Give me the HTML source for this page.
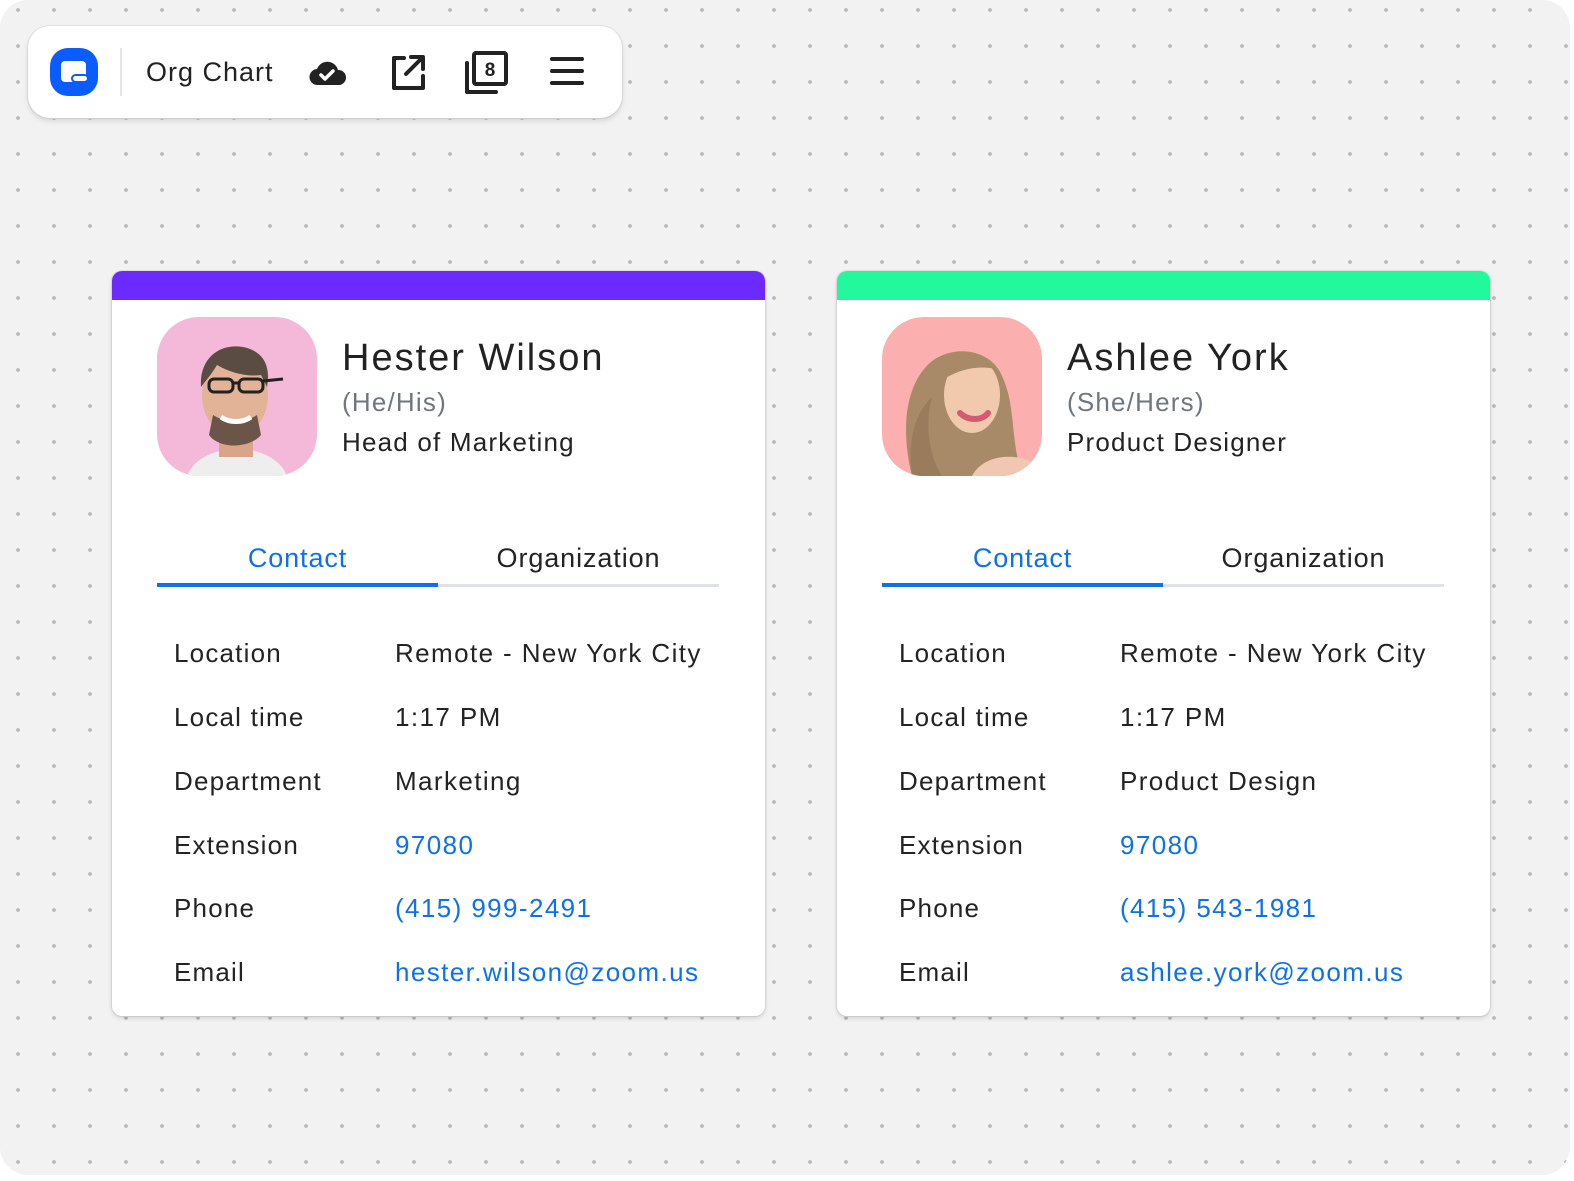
<!DOCTYPE html>
<html><head><meta charset="utf-8"><style>
*{margin:0;padding:0;box-sizing:border-box}
body{width:1574px;height:1181px;background:#fff;font-family:"Liberation Sans",sans-serif;position:relative;overflow:hidden}
.bg{position:absolute;left:0;top:0;width:1570px;height:1175px;border-radius:28px;background-color:#f2f2f2;background-image:radial-gradient(circle,#b8b8b8 1.6px,transparent 2.2px);background-size:36px 36px;background-position:0px -8px}
.tb{position:absolute;left:28px;top:26px;width:594px;height:92px;background:#fff;border-radius:22px;box-shadow:0 3px 6px rgba(0,0,0,.12),0 0 0 1px #e4e4e4}
.logo{position:absolute;left:22px;top:22px;width:48px;height:48px;border-radius:18px;background:#0b5cff}
.card{position:absolute;top:271px;width:653px;height:745px;background:#fff;border-radius:10px;box-shadow:0 2px 5px rgba(0,0,0,.15),0 0 0 1px #e3e3e3;overflow:hidden}
.bar{height:29px}
.av{position:absolute;left:45px;top:46px;width:160px;height:159px;border-radius:42px;overflow:hidden}
.name{position:absolute;left:230px;top:66px;font-size:38px;color:#222;letter-spacing:2px}
.pro{position:absolute;left:230px;top:116px;font-size:26px;color:#6e7680;letter-spacing:1.2px}
.title{position:absolute;left:230px;top:156px;font-size:26px;color:#232323;letter-spacing:1.2px}
.tab{position:absolute;top:272px;font-size:27px;text-align:center;width:281px;letter-spacing:0.9px}
.line{position:absolute;left:45px;top:313px;width:562px;height:3px;background:#dfe3e8}
.uline{position:absolute;left:45px;top:312px;width:281px;height:4px;background:#0e71eb}
.row{position:absolute;left:62px;font-size:26px;color:#232323;letter-spacing:1.2px}
.val{position:absolute;left:283px;font-size:26px;color:#232323;letter-spacing:1.4px}
.lnk{color:#0e71eb}
</style></head><body>
<div class="bg"></div>
<div class="tb">
 <div class="logo"><svg width="48" height="48" viewBox="0 0 48 48"><rect x="11" y="13" width="25" height="21" rx="4" fill="#fff"/><rect x="22" y="27" width="16" height="7" rx="3.5" fill="#fff" stroke="#0b5cff" stroke-width="2"/></svg></div>
 <div style="position:absolute;left:92px;top:22px;width:2px;height:48px;background:#e6e6e6"></div>
 <div style="position:absolute;left:118px;top:31px;font-size:27px;color:#222;letter-spacing:1px">Org Chart</div>
 <svg style="position:absolute;left:280px;top:28px" width="40" height="36" viewBox="0 0 40 36"><path d="M10 31a8 8 0 0 1-1-16 11 11 0 0 1 21 1 7.5 7.5 0 0 1 1 15z" fill="#222"/><path d="M13 21l4 4 8-8" stroke="#fff" stroke-width="3.5" fill="none" stroke-linecap="round" stroke-linejoin="round"/></svg>
 <svg style="position:absolute;left:360px;top:26px" width="40" height="40" viewBox="0 0 40 40"><path d="M16 6H6v30h29V24" stroke="#222" stroke-width="4" fill="none" stroke-linejoin="round" stroke-linecap="round"/><path d="M18 22L34 6M23 5h12v12" stroke="#222" stroke-width="4" fill="none" stroke-linecap="round" stroke-linejoin="round"/></svg>
 <svg style="position:absolute;left:434px;top:23px" width="50" height="48" viewBox="0 0 50 48"><path d="M5 14v29h29" stroke="#222" stroke-width="4" fill="none" stroke-linecap="round" stroke-linejoin="round"/><rect x="12" y="4" width="32" height="31" rx="2" stroke="#222" stroke-width="4" fill="#fff"/><text x="28" y="27" font-family="Liberation Sans" font-weight="bold" font-size="19" text-anchor="middle" fill="#222">8</text></svg>
 <svg style="position:absolute;left:522px;top:30px" width="34" height="32" viewBox="0 0 34 32"><path d="M2 3h30M2 15h30M2 27h30" stroke="#222" stroke-width="4" stroke-linecap="round"/></svg>
</div>

<div class="card" style="left:112px">
 <div class="bar" style="background:#6b2aff"></div>
 <div class="av" style="background:#f4b9d9"><svg width="160" height="159" viewBox="0 0 160 159"><path d="M30 159c8-20 30-26 50-28 20 2 42 8 50 28z" fill="#eeeeee"/><rect x="62" y="110" width="34" height="30" fill="#d9a58a"/><ellipse cx="78" cy="78" rx="33" ry="42" fill="#e2b396"/><path d="M44 70c-2-30 20-44 42-40 20 4 28 18 24 40l-6-12c-14 2-30-2-44-10-6 10-10 14-16 22z" fill="#5a4c42"/><path d="M52 118c10 14 40 14 52 0l-4-20c-12 8-32 8-44 0z" fill="#6b5548"/><path d="M64 100c8 6 22 6 30 0" stroke="#fff" stroke-width="5" fill="none"/><rect x="52" y="62" width="24" height="13" rx="5" fill="none" stroke="#222" stroke-width="3"/><rect x="82" y="62" width="24" height="13" rx="5" fill="none" stroke="#222" stroke-width="3"/><path d="M76 66h6M106 64l20-2" stroke="#222" stroke-width="3"/></svg></div>
 <div class="name">Hester Wilson</div>
 <div class="pro">(He/His)</div>
 <div class="title">Head of Marketing</div>
 <div class="tab" style="left:45px;color:#0e71eb">Contact</div>
 <div class="tab" style="left:326px;color:#232323">Organization</div>
 <div class="line"></div><div class="uline"></div>
 <div class="row" style="top:367px">Location</div><div class="val" style="top:367px">Remote - New York City</div>
 <div class="row" style="top:431px">Local time</div><div class="val" style="top:431px">1:17 PM</div>
 <div class="row" style="top:495px">Department</div><div class="val" style="top:495px">Marketing</div>
 <div class="row" style="top:559px">Extension</div><div class="val lnk" style="top:559px">97080</div>
 <div class="row" style="top:622px">Phone</div><div class="val lnk" style="top:622px">(415) 999-2491</div>
 <div class="row" style="top:686px">Email</div><div class="val lnk" style="top:686px">hester.wilson@zoom.us</div>
</div>

<div class="card" style="left:837px">
 <div class="bar" style="background:#22f89c"></div>
 <div class="av" style="background:#fbb0af"><svg width="160" height="159" viewBox="0 0 160 159"><path d="M30 159c-10-40-10-90 20-115 25-18 60-10 70 15 14 30 8 60 20 100z" fill="#a88a68"/><path d="M90 159c10-20 40-24 60-14v14z" fill="#f0c7b0"/><ellipse cx="90" cy="78" rx="28" ry="38" fill="#f1c9ad"/><path d="M62 50c10-14 40-18 52 2-18-4-36 0-52 10z" fill="#a88a68"/><path d="M78 96c8 8 22 8 28 0" stroke="#d45a70" stroke-width="6" fill="none" stroke-linecap="round"/><path d="M50 80c-8 30-2 60 10 79h-30c-4-30 0-60 20-79z" fill="#9a7c5c"/></svg></div>
 <div class="name">Ashlee York</div>
 <div class="pro">(She/Hers)</div>
 <div class="title">Product Designer</div>
 <div class="tab" style="left:45px;color:#0e71eb">Contact</div>
 <div class="tab" style="left:326px;color:#232323">Organization</div>
 <div class="line"></div><div class="uline"></div>
 <div class="row" style="top:367px">Location</div><div class="val" style="top:367px">Remote - New York City</div>
 <div class="row" style="top:431px">Local time</div><div class="val" style="top:431px">1:17 PM</div>
 <div class="row" style="top:495px">Department</div><div class="val" style="top:495px">Product Design</div>
 <div class="row" style="top:559px">Extension</div><div class="val lnk" style="top:559px">97080</div>
 <div class="row" style="top:622px">Phone</div><div class="val lnk" style="top:622px">(415) 543-1981</div>
 <div class="row" style="top:686px">Email</div><div class="val lnk" style="top:686px">ashlee.york@zoom.us</div>
</div>
</body></html>
